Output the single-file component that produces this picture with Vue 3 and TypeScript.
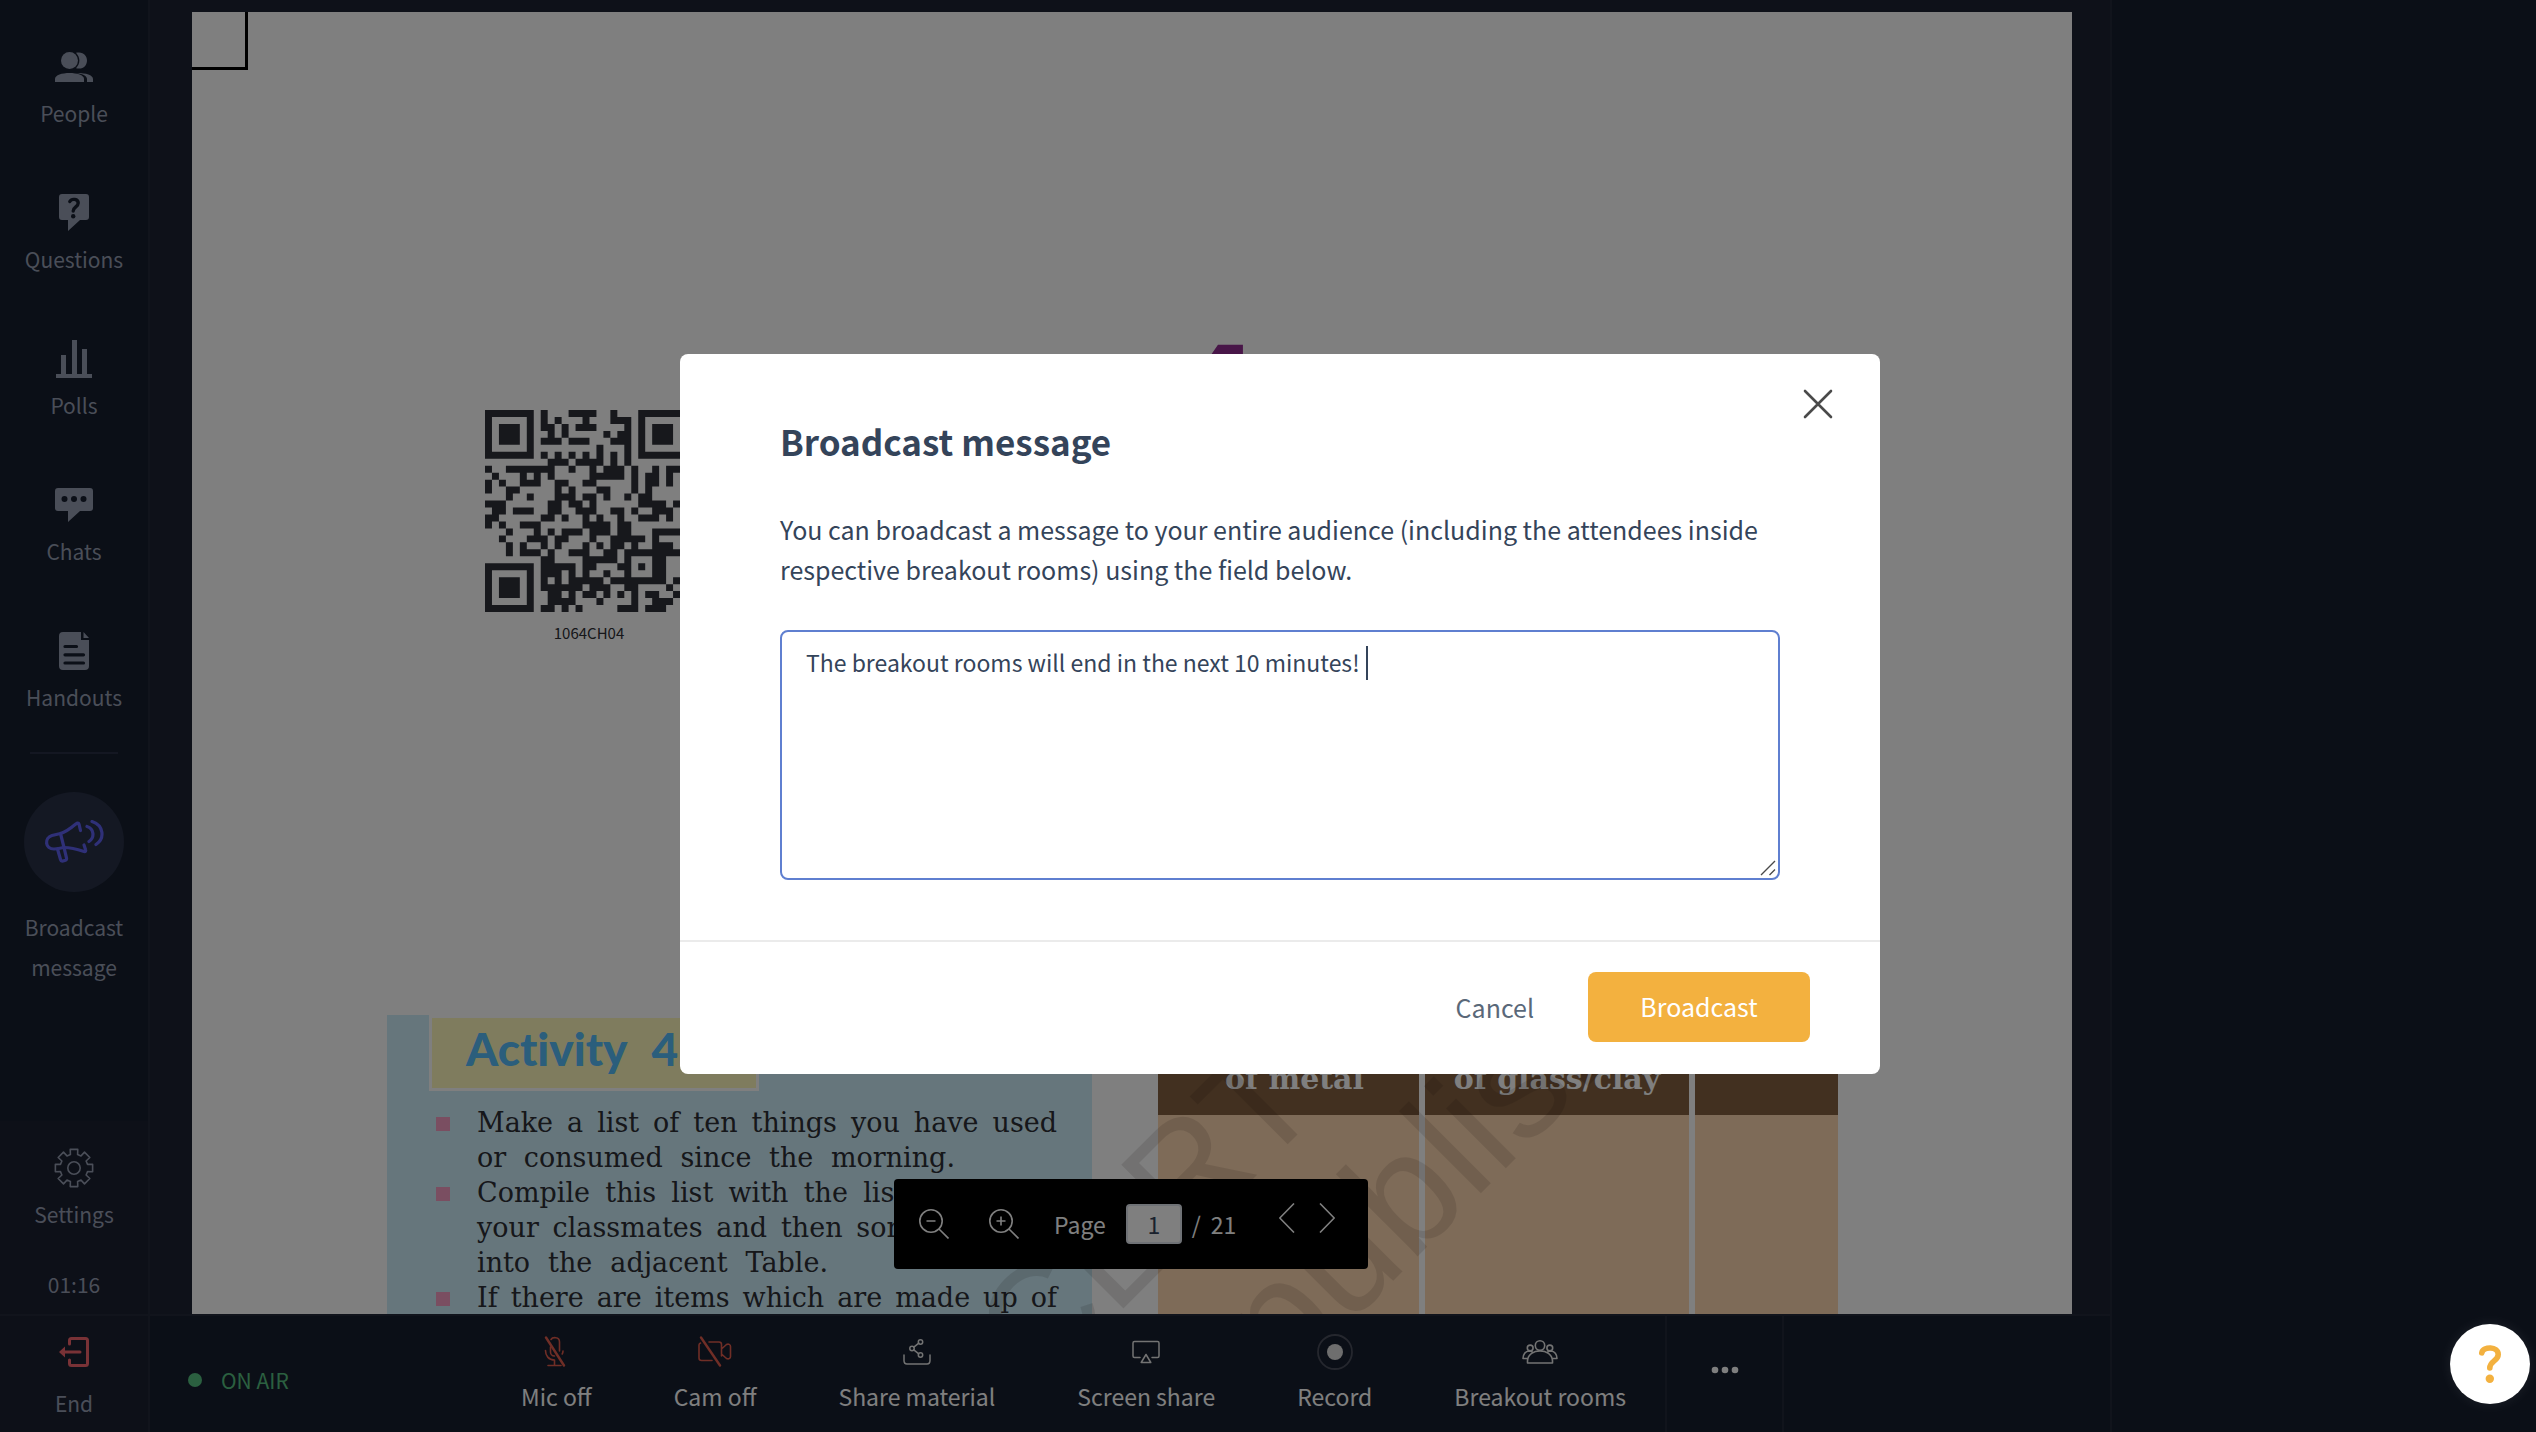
<script setup lang="ts">
import { ref } from 'vue'

const message = ref('The breakout rooms will end in the next 10 minutes!')
const page = ref('1')

// Dark modules of the QR code, as [first, last] column runs per row
const qrRuns: number[][][] = [
  [[0, 6], [8, 8], [12, 15], [18, 18], [22, 28]],
  [[0, 0], [6, 6], [8, 8], [10, 10], [14, 14], [18, 20], [22, 22], [28, 28]],
  [[0, 0], [2, 4], [6, 6], [8, 9], [11, 11], [13, 15], [20, 20], [22, 22], [24, 26], [28, 28]],
  [[0, 0], [2, 4], [6, 6], [9, 9], [11, 11], [17, 17], [19, 20], [22, 22], [24, 26], [28, 28]],
  [[0, 0], [2, 4], [6, 6], [8, 10], [12, 14], [18, 20], [22, 22], [24, 26], [28, 28]],
  [[0, 0], [6, 6], [16, 16], [20, 20], [22, 22], [28, 28]],
  [[0, 6], [8, 8], [10, 10], [12, 12], [14, 14], [16, 16], [18, 18], [20, 20], [22, 28]],
  [[9, 11], [13, 16], [18, 18], [20, 20]],
  [[0, 0], [3, 9], [12, 12], [15, 15], [17, 19], [21, 21], [24, 24], [26, 28]],
  [[1, 1], [5, 5], [7, 7], [9, 9], [15, 19], [21, 21], [23, 24], [26, 26]],
  [[0, 0], [2, 2], [5, 7], [10, 11], [14, 15], [21, 21], [23, 24], [26, 26]],
  [[0, 0], [3, 4], [10, 10], [12, 12], [16, 17], [21, 21], [23, 23]],
  [[3, 3], [6, 6], [10, 12], [14, 15], [17, 17], [20, 20], [22, 23]],
  [[0, 2], [9, 10], [12, 13], [15, 15], [22, 25], [27, 28]],
  [[1, 2], [4, 6], [9, 10], [13, 15], [18, 19], [21, 21], [24, 26]],
  [[0, 1], [8, 9], [11, 11], [14, 14], [16, 16], [19, 19], [22, 24], [26, 26]],
  [[0, 0], [2, 2], [5, 7], [14, 17], [19, 20]],
  [[3, 3], [7, 7], [9, 9], [11, 13], [15, 17], [19, 20], [24, 28]],
  [[2, 2], [6, 8], [10, 11], [15, 15], [18, 22], [24, 24]],
  [[3, 3], [5, 5], [8, 8], [10, 10], [14, 14], [16, 16], [18, 19], [21, 21], [24, 26]],
  [[3, 3], [5, 7], [9, 9], [12, 14], [17, 18], [20, 28]],
  [[8, 9], [14, 18], [20, 20], [24, 25]],
  [[0, 6], [8, 12], [14, 15], [19, 20], [22, 22], [24, 25]],
  [[0, 0], [6, 6], [8, 10], [12, 12], [14, 14], [17, 17], [20, 20], [24, 25]],
  [[0, 0], [2, 4], [6, 6], [8, 8], [10, 10], [12, 16], [18, 25], [27, 27]],
  [[0, 0], [2, 4], [6, 6], [8, 13], [15, 17], [20, 21], [26, 26]],
  [[0, 0], [2, 4], [6, 6], [9, 10], [12, 12], [14, 15], [17, 17], [19, 19], [21, 21], [23, 24], [27, 28]],
  [[0, 0], [6, 6], [9, 12], [16, 16], [21, 21], [24, 26]],
  [[0, 6], [8, 9], [11, 11], [13, 13], [19, 21], [23, 25]],
]
const qrPath = qrRuns
  .map((row, y) => row.map(([a, b]) => `M${a} ${y}h${b - a + 1}v1h-${b - a + 1}z`).join(''))
  .join('')

// Eight-toothed gear outline, centred on 20,20
function gearPath(): string {
  const pts: string[] = []
  for (let i = 0; i < 8; i++) {
    const c = (i * Math.PI) / 4
    for (const [r, d] of [[14, -0.26], [19, -0.2], [19, 0.2], [14, 0.26]]) {
      pts.push(`${(20 + r * Math.cos(c + d)).toFixed(2)} ${(20 + r * Math.sin(c + d)).toFixed(2)}`)
    }
  }
  return `M${pts.join('L')}Z`
}
const gear = gearPath()
</script>

<template>
  <div class="app">
    <nav class="side">
      <div class="side-main">
        <button class="side-item" type="button">
          <span class="side-icon">
            <svg width="38" height="30" viewBox="0 0 38 30" fill="currentColor">
              <ellipse cx="14.5" cy="8.5" rx="8.5" ry="8.5" />
              <path d="M0 30v-3c0-4 7-6 14.500-6S29 23 29 27v3z" />
              <path d="M21 .8C28-1 32 3.500 32 8.500S28 18 21 16.200c4.500-5 4.500-10.400 0-15.400z" />
              <path d="M22 21c9 0 16 2 16 6v3h-6v-3c0-3-4-5-10-6z" />
            </svg>
          </span>
          <span class="side-label">People</span>
        </button>
        <button class="side-item" type="button">
          <span class="side-icon">
            <svg width="30" height="38" viewBox="0 0 30 38">
              <path fill="currentColor" d="M3 0h24a3 3 0 0 1 3 3v20a3 3 0 0 1-3 3h-6L9 37V26H3a3 3 0 0 1-3-3V3a3 3 0 0 1 3-3z" />
              <path fill="none" stroke="#161e2e" stroke-width="3.400" stroke-linecap="round" d="M10.800 7.500c2-3.400 8.400-2.600 8.400 1.500 0 4-5 3.600-5 8" />
              <circle cx="14.200" cy="22.300" r="2.200" fill="#161e2e" />
            </svg>
          </span>
          <span class="side-label">Questions</span>
        </button>
        <button class="side-item" type="button">
          <span class="side-icon">
            <svg width="36" height="38" viewBox="0 0 36 38" fill="currentColor">
              <path d="M0 34h36v4H0zM5 15h5v19H5zM16 0h5v34h-5zM26 9h5v25h-5z" />
            </svg>
          </span>
          <span class="side-label">Polls</span>
        </button>
        <button class="side-item" type="button">
          <span class="side-icon">
            <svg width="38" height="34" viewBox="0 0 38 34">
              <path fill="currentColor" d="M3 0h32a3 3 0 0 1 3 3v17a3 3 0 0 1-3 3H25L13 34V23H3a3 3 0 0 1-3-3V3a3 3 0 0 1 3-3z" />
              <g fill="#161e2e"><circle cx="9.500" cy="11" r="3" /><circle cx="19" cy="11" r="3" /><circle cx="28.500" cy="11" r="3" /></g>
            </svg>
          </span>
          <span class="side-label">Chats</span>
        </button>
        <button class="side-item" type="button">
          <span class="side-icon">
            <svg width="30" height="38" viewBox="0 0 30 38">
              <path fill="currentColor" d="M4 0h18v8h8v26a4 4 0 0 1-4 4H4a4 4 0 0 1-4-4V4a4 4 0 0 1 4-4zM24.500 0l5.500 6h-5.500z" />
              <path stroke="#161e2e" stroke-width="3.200" stroke-linecap="round" d="M6 14.500h11.500M6 22.800h18.500M6 31h18.500" />
            </svg>
          </span>
          <span class="side-label">Handouts</span>
        </button>
        <hr class="side-rule" />
        <button class="side-item broadcast" type="button">
          <span class="disc">
            <svg width="60" height="44" viewBox="0 0 60 44" fill="none" stroke="currentColor" stroke-width="3.200" stroke-linecap="round" stroke-linejoin="round">
              <path d="M36.500 10.500 35 4.200c-.5-1.800-2-1-3.200-.2C27 8 22 12 16.500 13.500L8 15.500c-8 2.500-7 13.500 2 13.500 4 0 6-1 10-1.500 7 0 14 2 20 4 1.600.3 2-.8 1.500-2l-1.500-4.500" />
              <path d="M16.500 13.500 20 27.500M13.500 29l3 10.500c.4 1.400 1.200 1.800 2.500 1.500l2.500-.8c1-.4 1.300-1 1-2.200L20 27.500" />
              <path d="M43 6.500c7 2 8 11 2 15M48 1.500c12 4 13 17 4 23" />
            </svg>
          </span>
          <span class="side-label">Broadcast<br />message</span>
        </button>
      </div>
      <div class="side-settings">
        <button class="side-item" type="button">
          <span class="side-icon">
            <svg width="40" height="40" viewBox="0 0 40 40" fill="none" stroke="currentColor" stroke-width="1.600" stroke-linejoin="round">
              <path :d="gear" />
              <circle cx="20" cy="20" r="6.200" />
            </svg>
          </span>
          <span class="side-label">Settings</span>
        </button>
        <span class="side-label">01:16</span>
      </div>
      <button class="side-end" type="button">
        <svg width="30" height="30" viewBox="0 0 30 30" fill="none" stroke="#f2646c" stroke-width="3" stroke-linecap="round" stroke-linejoin="round">
          <path d="M10.500 7V3.500a2 2 0 0 1 2-2h14a2 2 0 0 1 2 2v23a2 2 0 0 1-2 2h-14a2 2 0 0 1-2-2V23M5 15h16" />
          <path fill="#f2646c" stroke="none" d="M0 15l6-5.500v11z" />
        </svg>
        <span class="side-label">End</span>
      </button>
    </nav>

    <main class="stage">
      <div class="viewer">
        <article class="sheet">
          <div class="crop-mark"></div>
          <div class="chapter">4</div>
          <figure class="qr">
            <svg width="202" height="202" viewBox="0 0 29 29"><path fill="#2e3038" :d="qrPath" /></svg>
            <figcaption>1064CH04</figcaption>
          </figure>
          <div class="sheet-row">
            <section class="activity">
              <h2><span>Activity</span><span>4.1</span></h2>
              <ul>
                <li>
                  <p>Make a list of ten things you have used</p>
                  <p class="mid">or consumed since the morning.</p>
                </li>
                <li>
                  <p>Compile this list with the lists made by</p>
                  <p>your classmates and then sort the items</p>
                  <p class="short">into the adjacent Table.</p>
                </li>
                <li>
                  <p>If there are items which are made up of</p>
                </li>
              </ul>
            </section>
            <table class="things">
              <thead>
                <tr><th>of metal</th><th>of glass/clay</th><th></th></tr>
              </thead>
              <tbody>
                <tr><td></td><td></td><td></td></tr>
              </tbody>
            </table>
          </div>
          <svg class="watermark" viewBox="0 0 1880 1302" width="1880" height="1302">
            <text font-size="150" transform="translate(662 1566) rotate(-45)">© NCERT</text>
            <text font-size="160" transform="translate(520 1950) rotate(-45)">not to be republished</text>
          </svg>
          <div class="pager">
            <button type="button" class="zoom" aria-label="Zoom out">
              <svg width="30" height="30" viewBox="0 0 30 30" fill="none" stroke="currentColor" stroke-width="1.600">
                <circle cx="12" cy="12" r="11.200" /><path d="M20 20l9.500 9.500M7.500 12h9" />
              </svg>
            </button>
            <button type="button" class="zoom" aria-label="Zoom in">
              <svg width="30" height="30" viewBox="0 0 30 30" fill="none" stroke="currentColor" stroke-width="1.600">
                <circle cx="12" cy="12" r="11.200" /><path d="M20 20l9.500 9.500M7.500 12h9M12 7.500v9" />
              </svg>
            </button>
            <label for="page-no">Page</label>
            <input id="page-no" v-model="page" type="text" />
            <span class="slash">/</span>
            <span>21</span>
            <button type="button" class="prev" aria-label="Previous page">
              <svg width="16" height="30" viewBox="0 0 16 30" fill="none" stroke="currentColor" stroke-width="1.600"><path d="M15 .5.800 15 15 29.500" /></svg>
            </button>
            <button type="button" class="next" aria-label="Next page">
              <svg width="16" height="30" viewBox="0 0 16 30" fill="none" stroke="currentColor" stroke-width="1.600"><path d="M1 .5 15.200 15 1 29.500" /></svg>
            </button>
          </div>
        </article>
      </div>

      <footer class="controls">
        <div class="on-air"><i class="dot"></i>ON AIR</div>
        <div class="tools">
          <button type="button">
            <span class="tool-icon off">
              <svg width="24" height="32" viewBox="0 0 24 32" fill="none" stroke="currentColor" stroke-width="1.600" stroke-linecap="round">
                <path d="M7 3.500C8.500 1 15.500.5 15.500 6v9M6.500 11v5c0 2 1.500 4 4 4M1.500 14.500c0 5 3 9.500 9 9.500M19 15c0 1-.2 2-.8 3M10.500 24v5.500M4 29.500h13" />
                <path stroke-width="2.400" d="M2 1.500l18 28" />
              </svg>
            </span>
            Mic off
          </button>
          <button type="button">
            <span class="tool-icon off">
              <svg width="34" height="32" viewBox="0 0 34 32" fill="none" stroke="currentColor" stroke-width="1.600" stroke-linecap="round" stroke-linejoin="round">
                <path d="M2.500 7C1.500 7.500 1 8 1 9v13c0 1.500 1 2.500 2.500 2.500H14M11 6h10c1.500 0 2.500 1 2.500 2.500V20M23.500 13l5-4.500c2-1 4 0 4 2v10c0 2-2 3-4 2l-5-4.500" />
                <path stroke-width="2.400" d="M3 1.500l19 28" />
              </svg>
            </span>
            Cam off
          </button>
          <button type="button">
            <span class="tool-icon">
              <svg width="28" height="26" viewBox="0 0 28 26" fill="none" stroke="currentColor" stroke-width="1.500" stroke-linecap="round">
                <path d="M1 16v5.500C1 23.500 2 25 4 25h20c2 0 3-1.500 3-3.500V16M10.800 8.200l5-4M10.800 10.800l5 4" />
                <circle cx="17.500" cy="3" r="2.200" /><circle cx="9" cy="9.500" r="2.200" /><circle cx="17.500" cy="16" r="2.200" />
              </svg>
            </span>
            Share material
          </button>
          <button type="button">
            <span class="tool-icon">
              <svg width="28" height="24" viewBox="0 0 28 24" fill="none" stroke="currentColor" stroke-width="1.500" stroke-linecap="round" stroke-linejoin="round">
                <path d="M8 17.500H2.500c-1 0-1.500-.5-1.500-1.500V3c0-1 .5-1.500 1.500-1.500h23c1 0 1.500.5 1.500 1.500v13c0 1-.5 1.500-1.500 1.500H20M14 14.500l4.800 8H9.200z" />
              </svg>
            </span>
            Screen share
          </button>
          <button type="button">
            <span class="tool-icon">
              <svg width="36" height="36" viewBox="0 0 36 36">
                <circle cx="18" cy="18" r="17" fill="none" stroke="#4a4e5c" stroke-width="1.800" /><circle cx="18" cy="18" r="8" fill="#dcdcdc" />
              </svg>
            </span>
            Record
          </button>
          <button type="button">
            <span class="tool-icon">
              <svg width="36" height="24" viewBox="0 0 36 24" fill="none" stroke="currentColor" stroke-width="1.600" stroke-linejoin="round">
                <circle cx="18" cy="5.500" r="4.700" /><circle cx="8.200" cy="8" r="2.900" /><circle cx="27.800" cy="8" r="2.900" />
                <path d="M5.500 23v-2C6 7.500 30 7.500 30.500 21v2zM6.500 18.500H1c0-4 2.500-7.300 6-7.500 1.500 0 2.500.3 3.500 1M29.500 18.500H35c0-4-2.500-7.300-6-7.500-1.500 0-2.500.3-3.500 1" />
              </svg>
            </span>
            Breakout rooms
          </button>
        </div>
        <button type="button" class="more" aria-label="More">
          <svg width="28" height="8" viewBox="0 0 28 8" fill="currentColor"><circle cx="4" cy="4" r="3.300" /><circle cx="14" cy="4" r="3.300" /><circle cx="24" cy="4" r="3.300" /></svg>
        </button>
      </footer>
    </main>

    <aside class="panel"></aside>

    <div class="backdrop">
      <form class="modal" role="dialog" aria-labelledby="modal-title" @submit.prevent>
        <button type="button" class="close" aria-label="Close">
          <svg width="30" height="30" viewBox="0 0 30 30" stroke="#4a4a4a" stroke-width="2.600" stroke-linecap="round"><path d="M2 2l26 26M28 2 2 28" /></svg>
        </button>
        <div class="modal-body">
          <h1 id="modal-title">Broadcast message</h1>
          <label for="message">You can broadcast a message to your entire audience (including the attendees inside respective breakout rooms) using the field below.</label>
          <div class="field">
            <textarea id="message" v-model="message"></textarea>
            <i class="caret"></i>
            <svg class="grip" width="16" height="16" viewBox="0 0 16 16" stroke="#4a4a4a" stroke-width="1.400"><path d="M1 15 15 1M9.500 15 15 9.500" /></svg>
          </div>
        </div>
        <div class="modal-foot">
          <button type="button" class="cancel">Cancel</button>
          <button type="submit" class="send">Broadcast</button>
        </div>
      </form>
    </div>

    <button type="button" class="help" aria-label="Help">
      <svg width="24" height="40" viewBox="0 0 24 40" fill="none" stroke="#f3b13f" stroke-width="5.600" stroke-linecap="round">
        <path d="M3.800 8.800c1.500-6.600 16.400-6.600 16.400 1.600 0 6.500-8.400 6.500-8.400 13.600" />
        <circle cx="11.800" cy="34.800" r="4.200" fill="#f3b13f" stroke="none" />
      </svg>
    </button>
  </div>
</template>

<style>
body {
  margin: 0;
  background: #161e2e;
}
</style>

<style scoped>
.app {
  display: flex;
  height: 100vh;
  overflow: hidden;
  background: #161e2e;
  color: #fff;
  font-family: "Noto Sans CJK SC", "Noto Sans", sans-serif;
}

button {
  padding: 0;
  border: 0;
  background: none;
  color: inherit;
  font: inherit;
}

svg {
  display: block;
}

/* Left navigation */
.side {
  display: flex;
  flex-direction: column;
  flex: none;
  width: 148px;
  border-right: 2px solid #222838;
  color: #949cb0;
}

.side-main {
  display: flex;
  flex-direction: column;
  align-items: center;
  flex: 1;
  gap: 61px;
  padding-top: 47px;
}

.side-item {
  display: flex;
  flex-direction: column;
  align-items: center;
  gap: 7px;
}

.side-icon {
  display: flex;
  align-items: center;
  height: 40px;
}

.side-label {
  font-size: 21px;
  line-height: 38px;
}

.side-rule {
  width: 88px;
  height: 2px;
  margin: -25px 0 -23px;
  border: 0;
  background: #282e44;
}

.broadcast {
  gap: 15px;
}

.broadcast .side-label {
  line-height: 40px;
}

.disc {
  display: flex;
  align-items: center;
  justify-content: center;
  width: 100px;
  height: 100px;
  border-radius: 50%;
  background: #283046;
  color: #5e60f0;
}

.side-settings {
  display: flex;
  flex-direction: column;
  align-items: center;
  gap: 32px;
  padding: 27px 0 11px;
  background: #1a2030;
}

.side-end {
  display: flex;
  flex-direction: column;
  align-items: center;
  gap: 17px;
  height: 118px;
  padding-top: 21px;
  border-top: 2px solid #222838;
  background: #1a2030;
}

/* Presentation area */
.stage {
  display: flex;
  flex-direction: column;
  flex: 1;
  min-width: 0;
  border-right: 2px solid #222838;
}

.viewer {
  display: flex;
  flex: 1;
  min-height: 0;
  padding: 12px 38px 0 42px;
  background: #1c2232;
}

.sheet {
  position: relative;
  flex: 1;
  min-width: 0;
  overflow: hidden;
  background: #fff;
  color: #2c2e34;
}

.crop-mark {
  width: 53px;
  height: 55px;
  border: solid #000;
  border-width: 0 3px 3px 0;
}

.chapter {
  height: 340px;
  padding: 221px 0 0 982px;
  box-sizing: border-box;
  color: #902c90;
  font: 800 140px/200px "Open Sans", sans-serif;
}

.qr {
  width: 202px;
  margin: 0 0 0 293px;
}

.qr figcaption {
  padding-left: 6px;
  font-size: 15px;
  line-height: 42px;
  text-align: center;
}

.sheet-row {
  display: flex;
  align-items: flex-start;
  gap: 66px;
  margin-top: 361px;
  padding-left: 195px;
}

.activity {
  width: 705px;
  height: 320px;
  background: #ccecf8;
}

.activity h2 {
  display: flex;
  gap: 24px;
  width: 290px;
  height: 70px;
  margin: 0 0 14px 42px;
  padding-left: 34px;
  border: 3px solid #fff;
  background: #fff9bc;
  color: #56bcf8;
  font: 900 46px/62px Lato, sans-serif;
  font-variant-ligatures: none;
}

.activity ul {
  margin: 0;
  padding: 0 35px 0 49px;
  list-style: none;
  font: 27px/35px "DejaVu Serif", serif;
}

.activity li {
  display: grid;
  grid-template-columns: 14px 1fr;
  column-gap: 27px;
}

.activity li::before {
  content: "";
  height: 14px;
  margin-top: 12px;
  background: #f49cc2;
}

.activity p {
  grid-column: 2;
  margin: 0;
  white-space: nowrap;
  text-align: justify;
  text-align-last: justify;
}

.activity .mid {
  width: 478px;
}

.activity .short {
  width: 351px;
}

.things {
  width: 680px;
  height: 320px;
  border-collapse: collapse;
  table-layout: fixed;
}

.things th {
  width: 264px;
  height: 100px;
  box-sizing: border-box;
  padding: 0 0 18px;
  background: #846040;
  color: #fff;
  font: bold 30px/36px "DejaVu Serif", serif;
  vertical-align: bottom;
}

.things th:first-child {
  padding-left: 12px;
}

.things th:nth-child(2) {
  width: 270px;
}

.things th:last-child {
  width: auto;
}

.things td {
  padding: 0;
  background: #fcd6b0;
}

.things th + th,
.things td + td {
  border-left: 6px solid #fff;
}

.watermark {
  position: absolute;
  top: 0;
  left: 0;
  font-family: "Liberation Sans", sans-serif;
  fill: rgba(20, 0, 0, 0.11);
}

.pager {
  position: absolute;
  bottom: 45px;
  left: 50%;
  display: flex;
  align-items: center;
  box-sizing: border-box;
  width: 474px;
  height: 90px;
  margin-left: -238px;
  padding-left: 25px;
  border-radius: 4px;
  background: #000;
  color: #fff;
  font-size: 23px;
  line-height: 40px;
}

.zoom {
  margin-right: 40px;
}

.pager label {
  margin: 0 20px 0 -5px;
}

.pager input {
  box-sizing: border-box;
  width: 56px;
  height: 40px;
  padding: 0;
  border: 2px solid #dfe4ec;
  border-radius: 4px;
  background: #fff;
  color: #34425a;
  font: inherit;
  text-align: center;
}

.slash {
  margin: 0 10px;
}

.prev {
  margin: 0 24px 12px 43px;
}

.next {
  margin-bottom: 12px;
}

/* Bottom controls */
.controls {
  display: flex;
  flex: none;
  height: 116px;
  border-top: 2px solid #222838;
  font-size: 23px;
}

.on-air {
  display: flex;
  align-items: center;
  gap: 19px;
  width: 333px;
  padding: 12px 0 0 38px;
  color: #56c080;
  font-size: 21px;
}

.dot {
  width: 14px;
  height: 14px;
  border-radius: 50%;
  background: #56c080;
}

.tools {
  display: flex;
  gap: 82px;
  padding-right: 39px;
}

.tools button {
  display: flex;
  flex-direction: column;
  align-items: center;
  line-height: 40px;
}

.tool-icon {
  display: flex;
  align-items: center;
  height: 36px;
  margin: 18px 0 6px;
  color: #e6e6e6;
}

.tool-icon.off {
  color: #e05c4c;
}

.more {
  display: flex;
  align-items: center;
  justify-content: center;
  width: 119px;
  padding-bottom: 8px;
  border: solid #222838;
  border-width: 0 2px;
}

.panel {
  flex: none;
  width: 424px;
}

/* Dialog */
.backdrop {
  position: fixed;
  inset: 0;
  display: flex;
  align-items: center;
  justify-content: center;
  padding: 0 0 4px 24px;
  background: rgba(0, 0, 0, 0.5);
}

.modal {
  position: relative;
  width: 1200px;
  border-radius: 8px;
  background: #fff;
  color: #34445a;
}

.close {
  position: absolute;
  top: 35px;
  right: 47px;
}

.modal-body {
  padding: 63px 100px 60px;
}

.modal h1 {
  margin: 0 0 44px;
  font-size: 35px;
  line-height: 48px;
}

.modal label {
  display: block;
  margin-bottom: 41px;
  font-size: 25px;
  line-height: 40px;
}

.field {
  position: relative;
}

textarea {
  display: block;
  box-sizing: border-box;
  width: 100%;
  height: 250px;
  padding: 11px 24px;
  border: 2px solid #5f7fd0;
  border-radius: 8px;
  outline: 0;
  resize: none;
  background: #fff;
  color: inherit;
  font: 23px/38px "Noto Sans CJK SC", "Noto Sans", sans-serif;
}

.caret {
  position: absolute;
  top: 16px;
  left: 586px;
  width: 2px;
  height: 34px;
  background: #34445a;
}

.grip {
  position: absolute;
  right: 4px;
  bottom: 4px;
}

.modal-foot {
  display: flex;
  align-items: center;
  justify-content: flex-end;
  gap: 54px;
  padding: 30px 70px 32px;
  border-top: 2px solid #ebebeb;
  font-size: 25px;
}

.cancel {
  color: #5a6879;
}

.send {
  width: 222px;
  height: 70px;
  padding-bottom: 3px;
  border-radius: 8px;
  background: #f3b13f;
  color: #fff;
}

.help {
  position: fixed;
  right: 6px;
  bottom: 28px;
  display: flex;
  align-items: center;
  justify-content: center;
  width: 80px;
  height: 80px;
  border-radius: 50%;
  background: #fff;
  box-shadow: 0 0 14px rgba(255, 255, 255, 0.08);
}
</style>
